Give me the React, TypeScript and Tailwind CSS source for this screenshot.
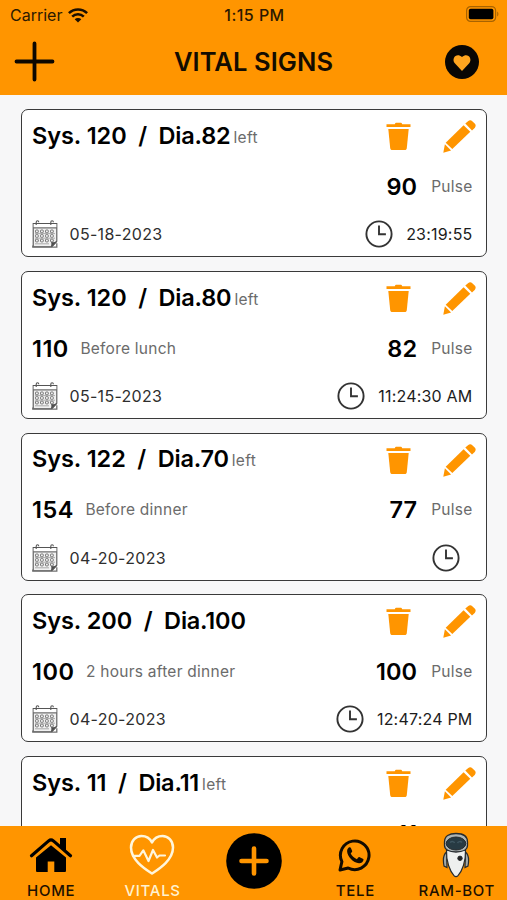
import React from "react";

type Reading = {
  sys: string;
  dia: string;
  arm?: string;
  glucose?: string;
  meal?: string;
  pulse: string;
  date: string;
  time: string;
};

const readings: Reading[] = [
  { sys: "120", dia: "82", arm: "left", pulse: "90", date: "05-18-2023", time: "23:19:55" },
  { sys: "120", dia: "80", arm: "left", glucose: "110", meal: "Before lunch", pulse: "82", date: "05-15-2023", time: "11:24:30 AM" },
  { sys: "122", dia: "70", arm: "left", glucose: "154", meal: "Before dinner", pulse: "77", date: "04-20-2023", time: "" },
  { sys: "200", dia: "100", glucose: "100", meal: "2 hours after dinner", pulse: "100", date: "04-20-2023", time: "12:47:24 PM" },
  { sys: "11", dia: "11", arm: "left", pulse: "11", date: "", time: "" },
];

const TrashIcon = () => (
  <svg width="25" height="29" viewBox="0 0 25 29" fill="#ff9500">
    <path d="M.5 2.200h8.300C9.200 1.100 9.600.8 10.700.8h3.600c1.100 0 1.500.3 1.900 1.400h8.300v2.900H.5z" />
    <path d="M2.300 6.900h20.400l-1.900 19.200c-.2 1.500-.8 2-2.100 2H6.300c-1.300 0-1.900-.5-2.100-2z" />
  </svg>
);

const PencilIcon = () => (
  <svg width="33" height="33" viewBox="0 0 33 33" fill="#ff9500">
    <path d="M22.300 3.600 25 1.200c1.500-1.200 3-1.200 4.300 0l2.400 2.400c1.300 1.300 1.300 2.900 0 4.300L29 10.400z" />
    <path d="m20.600 5.300 6.700 6.500L9.300 29 2.700 22.700z" />
    <path d="m1.900 24.300 6.200 6.200L.3 32.700z" />
  </svg>
);

const CalendarIcon = () => (
  <svg width="26" height="28" viewBox="0 0 26 28" fill="none" stroke="#555" strokeWidth="1.100">
    <path d="M1.200 3.500h23.600v17.800l-5 5.500H1.200z" fill="#f1f1f1" />
    <path d="M1.700 4h22.600v3.500H1.700z" fill="#fff" stroke="none" />
    <path d="M1 7.800h24M.8 25.500v1.700h24v-4" stroke="#707070" strokeWidth="1.300" />
    <path d="M4.200 5V2.200c0-2 2.600-2 2.600 0M18.800 5V2.200c0-2 2.600-2 2.600 0" />
    {[11, 15.600, 20.200].map((y) =>
      [4.800, 9.800, 14.800, 19.800].map((x) => (
        <rect key={`${x}-${y}`} x={x - 1.300} y={y - 1} width="2.800" height="2.700" rx=".8" stroke="#666" strokeWidth=".9" />
      ))
    )}
    <path d="M3 13.600h20M3 18.200h20M3 23.800h14" stroke="#999" strokeWidth=".8" />
    <path d="M19.500 26.500c.7-2 .5-3 .3-4 1.800.5 3 .3 4.700-.8z" fill="#444" />
  </svg>
);

const ClockIcon = () => (
  <svg width="28" height="28" viewBox="0 0 28 28" fill="none" stroke="#333" strokeWidth="1.900">
    <circle cx="14" cy="14" r="12.600" />
    <path d="M14 5.500v8.800h6.900" />
  </svg>
);

function Card({ r }: { r: Reading }) {
  return (
    <article className="h-[148px] w-[466px] shrink-0 rounded-[7px] border border-[#3a3a3a] bg-white pr-[13px] pl-[10.5px]">
      <div className="flex h-[52px] items-center justify-between pt-px">
        <div className="-mt-[2px] flex items-baseline text-[23.5px] font-semibold text-black">
          <span className="tracking-[-0.05px]">Sys. {r.sys}</span>
          <span className="mx-[11.500px]">/</span>
          <span className="tracking-[-0.200px]">Dia.{r.dia}</span>
          {r.arm && <span className="relative -top-px ml-[3px] text-[15.500px] font-normal tracking-[0.300px] text-[#6b6b6b]">{r.arm}</span>}
        </div>
        <div className="-mr-[3px] flex items-center gap-[32px]">
          <TrashIcon />
          <PencilIcon />
        </div>
      </div>
      <div className="flex h-[49px] items-center justify-between">
        <div className="flex items-center gap-[11.500px]">
          <span className="text-[23.5px] font-semibold tracking-[0.500px] text-black">{r.glucose}</span>
          <span className="text-[15.500px] tracking-[0.250px] text-[#6b6b6b]">{r.meal}</span>
        </div>
        <div className="flex items-center gap-[14px]">
          <span className="text-[23.5px] font-semibold tracking-[0.100px] text-black">{r.pulse}</span>
          <span className="text-[15.500px] tracking-[0.250px] text-[#6b6b6b]">Pulse</span>
        </div>
      </div>
      <div className="-mt-[0.5px] flex h-[47px] items-center justify-between">
        <div className="flex items-center gap-[11.500px]">
          <CalendarIcon />
          <span className="text-[16px] tracking-[0.300px] text-[#2e2e2e]">{r.date}</span>
        </div>
        <div className="flex items-center gap-[13px]">
          <ClockIcon />
          <span className="text-[16px] tracking-[0.200px] text-[#1c1c1c]">{r.time}</span>
        </div>
      </div>
    </article>
  );
}

const HomeIcon = () => (
  <svg width="44" height="36" viewBox="0 0 44 36" fill="#000">
    <path d="M22 8.200 37 20.500v13c0 1-.5 1.500-1.500 1.500H25.300V24.500h-6.600V35H8.500C7.500 35 7 34.500 7 33.500v-13z" />
    <path d="M2.500 19.500 19.600 4.700c1.700-1.300 3.100-1.300 4.800 0L41.500 19.500" fill="none" stroke="#ff9500" strokeWidth="6" />
    <path d="M31 1h6v13.500l-6-5.200z" />
    <path d="M2.500 18.700 19.600 3.900c1.700-1.300 3.100-1.300 4.800 0L41.500 18.700" fill="none" stroke="#000" strokeWidth="3.200" strokeLinecap="round" />
  </svg>
);

const VitalsIcon = () => (
  <svg width="46" height="42" viewBox="0 0 46 42" fill="none" stroke="#fff6dc" strokeWidth="2.500" strokeLinecap="round" strokeLinejoin="round">
    <path d="M23 39.500C17 35.500 2 26.500 2 13.500 2 6.500 7 2 12.500 2 17 2 21 4.500 23 8.500 25 4.500 29 2 33.500 2 39 2 44 6.500 44 13.500c0 13-15 22-21 26z" />
    <path d="M4 21.800h6.500l3.800-5.500 5.200 10.700 4.500-11 4 7.500 2.500-2H36" strokeWidth="2.200" />
  </svg>
);

const PhoneBubbleIcon = () => (
  <svg width="34" height="34" viewBox="0 0 34 34" fill="none" stroke="#120b00">
    <path d="M2 32 3.900 23.600A14.300 14.300 0 1 1 10.200 30z" strokeWidth="3" strokeLinejoin="round" />
    <path d="M11.300 9.300c-1 .4-2.300 2-2.200 4 .2 5.500 6.200 11.400 11.900 12 2 .1 4.200-1.200 4.500-3.300.1-.8-.1-1-.7-1.300l-3.100-1.500c-.7-.3-1-.2-1.500.4l-1.300 1.600c-3-1.200-4.900-3-6.200-5.600l1.200-1.500c.4-.5.4-.8.200-1.400L12.800 9.800c-.3-.6-.8-.7-1.500-.5z" fill="#120b00" stroke="none" />
  </svg>
);

const RobotIcon = () => (
  <svg width="28" height="46" viewBox="0 0 28 46" stroke="#262b2e">
    <path d="M4.500 20C1 23 1 29 2 34l3 1.500zM23.500 20c3.500 3 3.500 9 2.500 14l-3 1.500z" fill="#a2aaa9" strokeWidth="1.200" />
    <path d="M4.500 18.500c5-2.500 14-2.500 19 0 .5 11-3.500 20.500-7.500 25.200-1.200 1.300-2.800 1.300-4 0C8 39 4 29.500 4.500 18.500z" fill="#eef0ee" strokeWidth="1.200" />
    <path d="M2.500 10C2.500 4 7 1.500 14 1.500S25.500 4 25.500 10v3.500c0 4-4.500 6.500-11.500 6.500S2.500 17.500 2.500 13.500z" fill="#aeb5b5" strokeWidth="1.300" />
    <ellipse cx="14" cy="11.500" rx="9.800" ry="6.500" fill="#273a43" />
    <path d="M8 10.500c2-1.500 4-1 4.500.5M15.500 11c1-1.500 3-2 4.500-.5" fill="none" stroke="#3f5661" strokeWidth="1.500" />
    <circle cx="18" cy="26.300" r="2.200" fill="#222" />
  </svg>
);

function Tab({ label, active, children }: { label: string; active?: boolean; children: React.ReactNode }) {
  return (
    <div className="flex flex-1 flex-col items-center">
      <div className="flex h-[56px] items-center pt-[2px]">{children}</div>
      <span className={`pl-[1px] text-[15px] leading-[18px] font-medium tracking-[0.700px] whitespace-nowrap ${active ? "text-[#fff2d0]" : "text-[#1c1000]"}`}>{label}</span>
    </div>
  );
}

export default function App() {
  return (
    <div className="flex h-[900px] w-[507px] flex-col overflow-hidden bg-[#f7f7f8] font-['Inter','Liberation_Sans',sans-serif]">
      <header className="h-[95px] shrink-0 bg-[#ff9500]">
        <div className="flex h-[28px] items-center pr-[8px] pl-[10px] text-[16px] text-[#2b1900]">
          <div className="flex flex-1 items-center gap-[6px] pt-[2px]">
            <span>Carrier</span>
            <svg width="20" height="15" viewBox="0 0 20 15" fill="none" stroke="#1a0f00" strokeWidth="2.500">
              <path d="M.9 5.200a13 13 0 0 1 18.200 0M4.200 8.700a8.300 8.300 0 0 1 11.600 0" />
              <path d="M6.700 11.300a4.700 4.700 0 0 1 6.600 0L10 14.600z" fill="#1a0f00" stroke="none" />
            </svg>
          </div>
          <span className="pt-[2px] font-medium tracking-[0.450px]">1:15 PM</span>
          <div className="flex flex-1 justify-end">
            <svg width="33" height="16" viewBox="0 0 33 16">
              <rect x=".6" y=".6" width="29" height="14.800" rx="4" fill="none" stroke="#a86300" strokeWidth="1.200" />
              <rect x="2.800" y="2.800" width="24.600" height="10.400" rx="1.800" fill="#000" />
              <path d="M31.200 5.500c1.600.8 1.600 4.200 0 5z" fill="#a86300" />
            </svg>
          </div>
        </div>
        <div className="flex h-[67px] items-center pr-[28px] pl-[14px]">
          <svg width="41" height="41" viewBox="0 0 41 41" stroke="#0d0800" strokeWidth="3.800" strokeLinecap="round">
            <path d="M20.500 2.500v36M2.500 20.500h36" />
          </svg>
          <h1 className="flex-1 pt-px pl-[7px] text-center text-[25.500px] font-semibold tracking-[0.080px] text-[#140c00]">VITAL SIGNS</h1>
          <svg width="34" height="34" viewBox="0 0 34 34">
            <circle cx="17" cy="17" r="17" fill="#080604" />
            <path d="M17 26 9.800 18.300C6 13.500 11.500 7 17 12c5.500-5 11 1.500 7.200 6.300z" fill="#ffa51f" />
          </svg>
        </div>
      </header>
      <main className="flex min-h-0 flex-1 flex-col items-center gap-[13.750px] overflow-hidden pt-[14px]">
        {readings.map((r, i) => (
          <Card key={i} r={r} />
        ))}
      </main>
      <nav className="flex h-[74px] shrink-0 bg-[#ff9500]">
        <Tab label="HOME"><HomeIcon /></Tab>
        <Tab label="VITALS" active><VitalsIcon /></Tab>
        <div className="flex flex-1 justify-center pt-[7px]">
          <svg width="56" height="56" viewBox="0 0 56 56">
            <circle cx="28" cy="28" r="27.800" fill="#000" />
            <path d="M28 15.500v25M15.500 28h25" stroke="#ff9500" strokeWidth="4.600" strokeLinecap="round" />
          </svg>
        </div>
        <Tab label="TELE"><PhoneBubbleIcon /></Tab>
        <Tab label="RAM-BOT"><RobotIcon /></Tab>
      </nav>
    </div>
  );
}
